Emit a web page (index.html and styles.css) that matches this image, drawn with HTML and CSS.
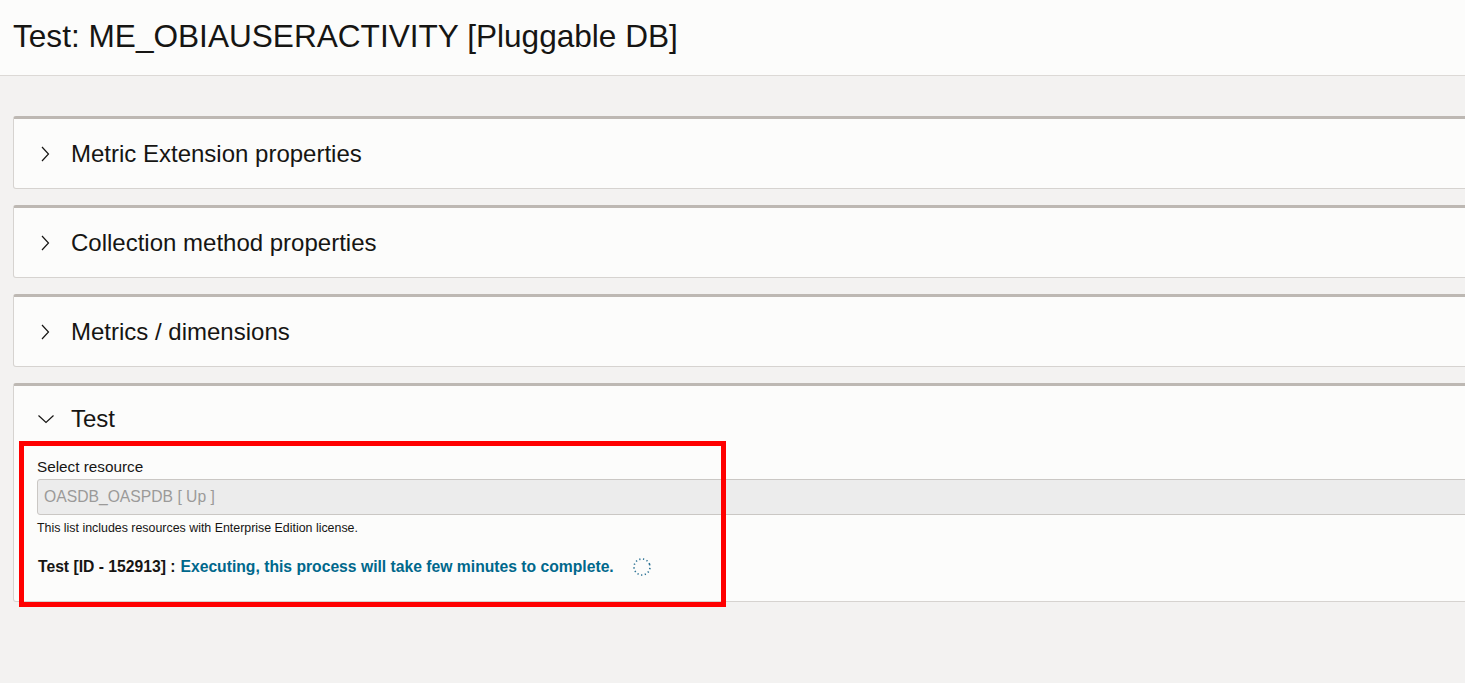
FILE: index.html
```html
<!DOCTYPE html>
<html lang="en">
<head>
    <meta charset="UTF-8">
    <title>Test: ME_OBIAUSERACTIVITY</title>
    <link rel="stylesheet" href="styles.css">
</head>
<body>
    <div class="page-header">
        <h1>Test: ME_OBIAUSERACTIVITY [Pluggable DB]</h1>
    </div>

    <div class="page-body">
        <div class="panel">
            <div class="panel-head">
                <svg class="chev" width="16" height="16" viewBox="0 0 16 16"><path d="M4 1 L10.5 8 L4 15" fill="none" stroke="#161513" stroke-width="1.2"/></svg>
                <span class="panel-title">Metric Extension properties</span>
            </div>
        </div>

        <div class="panel">
            <div class="panel-head">
                <svg class="chev" width="16" height="16" viewBox="0 0 16 16"><path d="M4 1 L10.5 8 L4 15" fill="none" stroke="#161513" stroke-width="1.2"/></svg>
                <span class="panel-title">Collection method properties</span>
            </div>
        </div>

        <div class="panel">
            <div class="panel-head">
                <svg class="chev" width="16" height="16" viewBox="0 0 16 16"><path d="M4 1 L10.5 8 L4 15" fill="none" stroke="#161513" stroke-width="1.2"/></svg>
                <span class="panel-title">Metrics / dimensions</span>
            </div>
        </div>

        <div class="panel open">
            <div class="panel-head">
                <svg class="chev" width="16" height="16" viewBox="0 0 16 16"><path d="M0.5 4.5 L8 11.5 L15.5 4.5" fill="none" stroke="#161513" stroke-width="1.2"/></svg>
                <span class="panel-title">Test</span>
            </div>
            <div class="panel-content">
                <label class="field-label">Select resource</label>
                <div class="select-box">OASDB_OASPDB [ Up ]</div>
                <div class="help">This list includes resources with Enterprise Edition license.</div>
                <div class="status">
                    <span class="status-id">Test [ID - 152913] :</span>
                    <span class="status-msg">Executing, this process will take few minutes to complete.</span>
                    <svg class="spinner" width="20" height="20" viewBox="0 0 20 20">
                        <circle cx="10" cy="10" r="8" fill="none" stroke="#2a7193" stroke-width="1.6" stroke-dasharray="2 4" transform="rotate(-20 10 10)" pathLength="80" />
                    </svg>
                </div>
            </div>
            <!-- annotation box -->
            <div class="highlight"></div>
        </div>
    </div>
</body>
</html>
```

FILE: styles.css
```css
*{
    margin: 0;
    padding: 0;
    box-sizing: border-box;
}

html, body{
    overflow: hidden;
}

body{
    background-color: #f3f2f1;
    font-family: "Liberation Sans", Arial, sans-serif;
    color: #161513;
    width: 1465px;
    height: 683px;
}

.page-header{
    height: 76px;
    background-color: #fcfcfb;
    border-bottom: 1px solid #dcd9d6;
    padding-left: 13px;
    display: flex;
    align-items: center;
}

.page-header h1{
    font-size: 31.6px;
    font-weight: normal;
    line-height: 1;
    margin-top: -2px;
}

.page-body{
    padding: 40px 0 0 13px;
    width: 1500px;
}

.panel{
    position: relative;
    background-color: #fcfcfb;
    border: 1px solid #d6d3d0;
    border-top: 3px solid #bdb8b3;
    border-radius: 3px;
    margin-bottom: 16px;
}

.panel-head{
    height: 69px;
    display: flex;
    align-items: center;
    padding-left: 24px;
}

.panel.open .panel-head{
    height: 66px;
}

.chev{
    flex: none;
}

.panel-title{
    font-size: 24px;
    margin-left: 17px;
}

.panel-content{
    padding: 6px 0 23px 23px;
}

.field-label{
    display: block;
    font-size: 15.3px;
    line-height: 18px;
}

.select-box{
    margin-top: 3px;
    height: 36px;
    background-color: #ececec;
    border: 1px solid #cac7c4;
    border-radius: 3px;
    color: #9b9a99;
    font-size: 15.7px;
    line-height: 34px;
    padding-left: 6px;
}

.help{
    margin-top: 5px;
    font-size: 12.4px;
    line-height: 16px;
}

.status{
    margin-top: 20px;
    display: flex;
    align-items: center;
    height: 22px;
    padding-left: 1px;
    font-size: 15.7px;
    font-weight: bold;
}

.status-id{
    margin-right: 5px;
}

.status-msg{
    color: #00688c;
}

.spinner{
    margin-left: 18px;
}

.highlight{
    position: absolute;
    left: 5px;
    top: 55px;
    width: 707px;
    height: 166px;
    border: 5px solid #ff0000;
}
```
